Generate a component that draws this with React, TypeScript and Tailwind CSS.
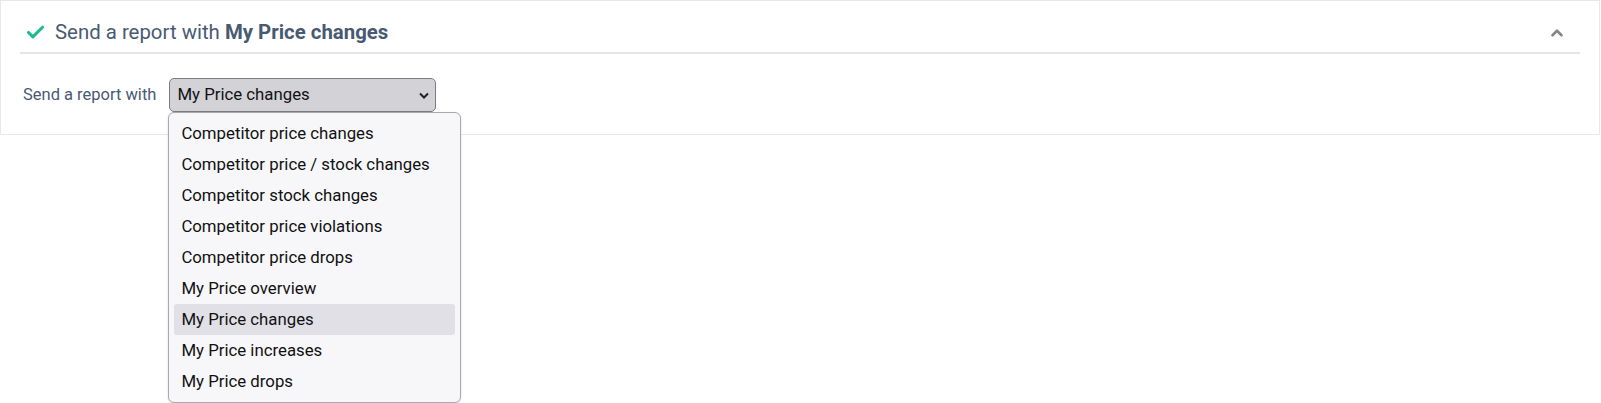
import { Check, ChevronUp } from 'lucide-react';

const OPTIONS = [
  'Competitor price changes',
  'Competitor price / stock changes',
  'Competitor stock changes',
  'Competitor price violations',
  'Competitor price drops',
  'My Price overview',
  'My Price changes',
  'My Price increases',
  'My Price drops',
];

const SELECTED = 'My Price changes';

export default function App() {
  return (
    <div className="h-[403px] w-[1601px] bg-white font-['Roboto',sans-serif]">
      <div className="w-[1600px] border border-[#e6e8ec] bg-white px-[19px] pb-[22px]">
        {/* header */}
        <div className="flex h-[53px] items-center border-b-2 border-[#e4e6ea] pl-[5px] pr-[14px] pt-[12px]">
          <Check className="h-[21px] w-[21px] text-[#21b98f]" strokeWidth={3.6} />
          <div className="ml-[9px] text-[20.4px] text-[#485a72]">
            Send a report with <span className="font-bold">My Price changes</span>
          </div>
          <ChevronUp className="ml-auto h-[18px] w-[18px] text-[#858585]" strokeWidth={3.5} />
        </div>

        {/* body */}
        <div className="mt-[24px] flex items-center pl-[3px]">
          <span className="text-[16.5px] text-[#485a72]">Send a report with</span>
          <div className="relative ml-[13px]">
            <div className="flex h-[34px] w-[267px] items-center rounded-[5px] border border-[#7c7c80] bg-[#d2d2d7] pl-[7px] pr-[6px] text-[16.8px] text-[#111]">
              <span>{SELECTED}</span>
              <svg className="ml-auto" width="10" height="7" viewBox="0 0 10 7">
                <polyline points="1,1.5 5,5.5 9,1.5" fill="none" stroke="#222" strokeWidth="2" />
              </svg>
            </div>

            <div className="absolute left-[-1px] top-[34px] z-10 w-[293px] rounded-[6px] border border-[#a9a9ad] bg-[#f7f7f9] px-[5px] py-[5px] shadow-sm">
              {OPTIONS.map((opt) => (
                <div
                  key={opt}
                  className={
                    opt === SELECTED
                      ? 'flex h-[31px] items-center rounded-[3px] bg-[#e1e0e6] px-[7px] text-[16.8px] text-[#111]'
                      : 'flex h-[31px] items-center rounded-[3px] px-[7px] text-[16.8px] text-[#111]'
                  }
                >
                  {opt}
                </div>
              ))}
            </div>
          </div>
        </div>
      </div>
    </div>
  );
}
